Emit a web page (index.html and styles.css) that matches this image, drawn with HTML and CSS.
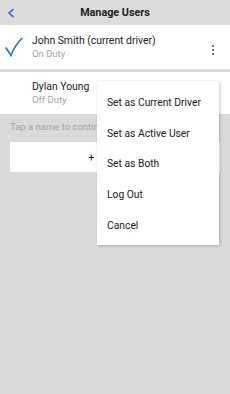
FILE: index.html
```html
<!DOCTYPE html>
<html>
<head>
<meta charset="utf-8">
<link rel="stylesheet" href="styles.css">
</head>
<body>
<div class="screen">
  <header class="topbar">
    <svg class="back" width="8" height="10" viewBox="0 0 8 10"><path d="M6.5 1 L2 5 L6.5 9" fill="none" stroke="#1a73d9" stroke-width="1.6"/></svg>
    <div class="title">Manage Users</div>
  </header>
  <div class="list">
    <div class="row row-first">
      <div class="check">
        <svg width="18" height="20" viewBox="0 0 18 20"><path d="M0.8 10.5 L6 18.5 Q10 8 17.2 1" fill="none" stroke="#1a73d9" stroke-width="1.6"/></svg>
      </div>
      <div class="info">
        <div class="name">John Smith (current driver)</div>
        <div class="status">On Duty</div>
      </div>
      <div class="kebab"><span></span><span></span><span></span></div>
    </div>
    <div class="row row-second">
      <div class="check"></div>
      <div class="info">
        <div class="name">Dylan Young</div>
        <div class="status">Off Duty</div>
      </div>
    </div>
  </div>
  <div class="hint">Tap a name to continue</div>
  <div class="addbtn">+ Add User</div>
  <div class="menu">
    <div class="item">Set as Current Driver</div>
    <div class="item">Set as Active User</div>
    <div class="item">Set as Both</div>
    <div class="item">Log Out</div>
    <div class="item">Cancel</div>
  </div>
</div>
</body>
</html>
```
FILE: styles.css
```css
* { box-sizing: border-box; }
html, body { margin: 0; padding: 0; }
body {
  width: 230px;
  height: 394px;
  background: #dadada;
  font-family: Roboto, "Noto Sans", sans-serif;
  overflow: hidden;
}
.screen {
  position: relative;
  width: 230px;
  height: 394px;
  background: #dadada;
}
.topbar {
  height: 25px;
  display: flex;
  align-items: center;
  justify-content: center;
  position: relative;
  background: #dcdcdc;
}
.back {
  position: absolute;
  left: 7px;
  top: 8px;
}
.title {
  font-size: 10.8px;
  font-weight: bold;
  color: #222;
}
.list {
  display: flex;
  flex-direction: column;
  gap: 3px;
}
.row {
  background: #fff;
  display: flex;
  align-items: center;
}
.row-first { height: 44px; }
.row-second { height: 42px; }
.check {
  width: 32px;
  padding-left: 5px;
  display: flex;
  align-items: center;
}
.info {
  flex: 1;
  display: flex;
  flex-direction: column;
  gap: 1px;
}
.name {
  font-size: 10.4px;
  color: #222;
  line-height: 13px;
}
.status {
  font-size: 9.5px;
  color: #a6a6a6;
  line-height: 12px;
}
.kebab {
  width: 20px;
  margin-right: 7px;
  display: flex;
  flex-direction: column;
  align-items: center;
  gap: 2px;
  padding-top: 6px;
}
.kebab span {
  width: 2px;
  height: 2px;
  background: #777;
}
.hint {
  font-size: 9.5px;
  color: #a8a8a8;
  padding: 7px 10px 0 10px;
  height: 28px;
}
.addbtn {
  margin: 0 10px;
  height: 30px;
  background: #fff;
  display: flex;
  align-items: center;
  justify-content: center;
  font-size: 11px;
  color: #222;
}
.menu {
  position: absolute;
  left: 97px;
  top: 81px;
  width: 122px;
  height: 164px;
  background: #fff;
  padding: 6px 0 4px 0;
  box-shadow: 1px 1px 3px rgba(0,0,0,0.22);
  display: flex;
  flex-direction: column;
}
.item {
  height: 30.8px;
  display: flex;
  align-items: center;
  padding-left: 10px;
  font-size: 10.3px;
  color: #222;
}
```
